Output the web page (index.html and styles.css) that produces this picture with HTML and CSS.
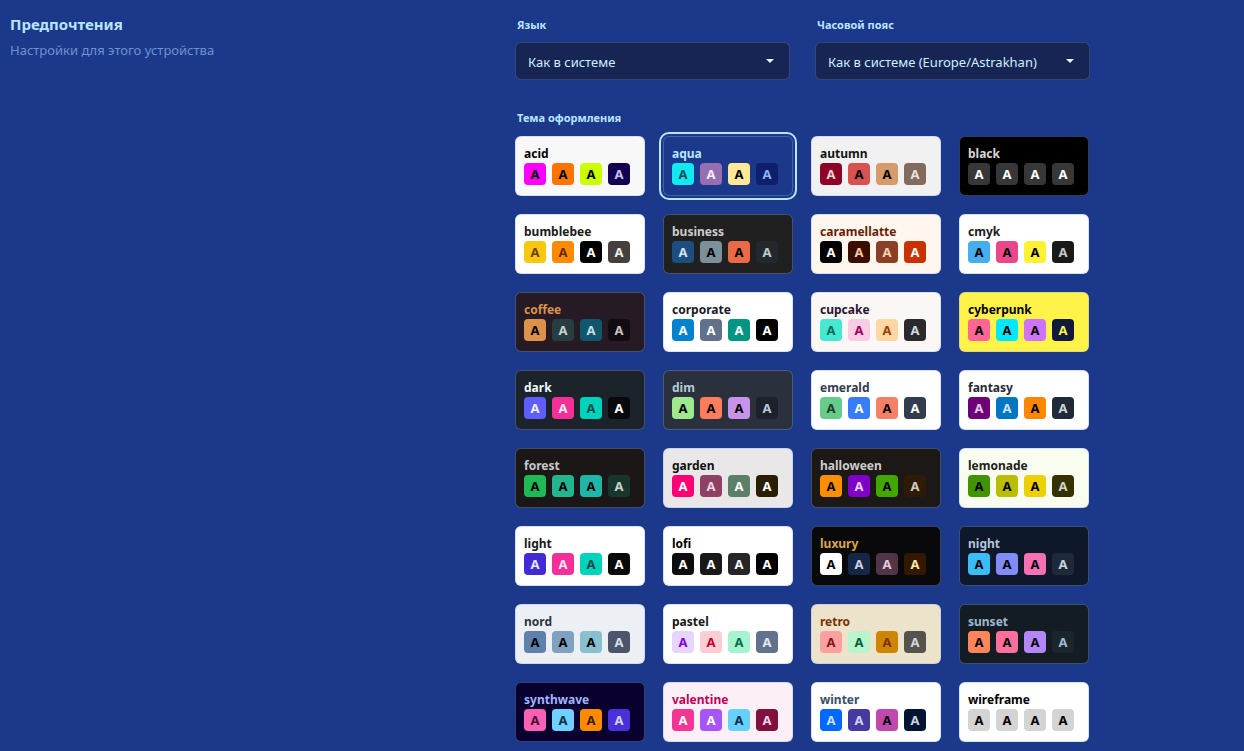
FILE: index.html
```html
<!DOCTYPE html>
<html lang="ru">
<head>
<meta charset="UTF-8">
<meta name="viewport" content="width=device-width, initial-scale=1.0">
<title>Предпочтения</title>
<link rel="stylesheet" href="styles.css">
</head>
<body>
  <div class="page">
    <div class="intro">
      <h2 class="intro-title">Предпочтения</h2>
      <p class="intro-sub">Настройки для этого устройства</p>
    </div>

    <div class="settings">
      <div class="selects">
        <label class="field">
          <span class="field-label">Язык</span>
          <span class="select">Как в системе<i class="caret"></i></span>
        </label>
        <label class="field">
          <span class="field-label">Часовой пояс</span>
          <span class="select">Как в системе (Europe/Astrakhan)<i class="caret"></i></span>
        </label>
      </div>

      <div class="field-label theme-label">Тема оформления</div>
      <div class="themes">
        <div class="theme t-acid"><div class="name">acid</div><div class="sw"><span class="p">A</span><span class="s">A</span><span class="a">A</span><span class="n">A</span></div></div>
        <div class="theme t-aqua selected"><div class="name">aqua</div><div class="sw"><span class="p">A</span><span class="s">A</span><span class="a">A</span><span class="n">A</span></div></div>
        <div class="theme t-autumn"><div class="name">autumn</div><div class="sw"><span class="p">A</span><span class="s">A</span><span class="a">A</span><span class="n">A</span></div></div>
        <div class="theme t-black"><div class="name">black</div><div class="sw"><span class="p">A</span><span class="s">A</span><span class="a">A</span><span class="n">A</span></div></div>

        <div class="theme t-bumblebee"><div class="name">bumblebee</div><div class="sw"><span class="p">A</span><span class="s">A</span><span class="a">A</span><span class="n">A</span></div></div>
        <div class="theme t-business"><div class="name">business</div><div class="sw"><span class="p">A</span><span class="s">A</span><span class="a">A</span><span class="n">A</span></div></div>
        <div class="theme t-caramellatte"><div class="name">caramellatte</div><div class="sw"><span class="p">A</span><span class="s">A</span><span class="a">A</span><span class="n">A</span></div></div>
        <div class="theme t-cmyk"><div class="name">cmyk</div><div class="sw"><span class="p">A</span><span class="s">A</span><span class="a">A</span><span class="n">A</span></div></div>

        <div class="theme t-coffee"><div class="name">coffee</div><div class="sw"><span class="p">A</span><span class="s">A</span><span class="a">A</span><span class="n">A</span></div></div>
        <div class="theme t-corporate"><div class="name">corporate</div><div class="sw"><span class="p">A</span><span class="s">A</span><span class="a">A</span><span class="n">A</span></div></div>
        <div class="theme t-cupcake"><div class="name">cupcake</div><div class="sw"><span class="p">A</span><span class="s">A</span><span class="a">A</span><span class="n">A</span></div></div>
        <div class="theme t-cyberpunk"><div class="name">cyberpunk</div><div class="sw"><span class="p">A</span><span class="s">A</span><span class="a">A</span><span class="n">A</span></div></div>

        <div class="theme t-dark"><div class="name">dark</div><div class="sw"><span class="p">A</span><span class="s">A</span><span class="a">A</span><span class="n">A</span></div></div>
        <div class="theme t-dim"><div class="name">dim</div><div class="sw"><span class="p">A</span><span class="s">A</span><span class="a">A</span><span class="n">A</span></div></div>
        <div class="theme t-emerald"><div class="name">emerald</div><div class="sw"><span class="p">A</span><span class="s">A</span><span class="a">A</span><span class="n">A</span></div></div>
        <div class="theme t-fantasy"><div class="name">fantasy</div><div class="sw"><span class="p">A</span><span class="s">A</span><span class="a">A</span><span class="n">A</span></div></div>

        <div class="theme t-forest"><div class="name">forest</div><div class="sw"><span class="p">A</span><span class="s">A</span><span class="a">A</span><span class="n">A</span></div></div>
        <div class="theme t-garden"><div class="name">garden</div><div class="sw"><span class="p">A</span><span class="s">A</span><span class="a">A</span><span class="n">A</span></div></div>
        <div class="theme t-halloween"><div class="name">halloween</div><div class="sw"><span class="p">A</span><span class="s">A</span><span class="a">A</span><span class="n">A</span></div></div>
        <div class="theme t-lemonade"><div class="name">lemonade</div><div class="sw"><span class="p">A</span><span class="s">A</span><span class="a">A</span><span class="n">A</span></div></div>

        <div class="theme t-light"><div class="name">light</div><div class="sw"><span class="p">A</span><span class="s">A</span><span class="a">A</span><span class="n">A</span></div></div>
        <div class="theme t-lofi"><div class="name">lofi</div><div class="sw"><span class="p">A</span><span class="s">A</span><span class="a">A</span><span class="n">A</span></div></div>
        <div class="theme t-luxury"><div class="name">luxury</div><div class="sw"><span class="p">A</span><span class="s">A</span><span class="a">A</span><span class="n">A</span></div></div>
        <div class="theme t-night"><div class="name">night</div><div class="sw"><span class="p">A</span><span class="s">A</span><span class="a">A</span><span class="n">A</span></div></div>

        <div class="theme t-nord"><div class="name">nord</div><div class="sw"><span class="p">A</span><span class="s">A</span><span class="a">A</span><span class="n">A</span></div></div>
        <div class="theme t-pastel"><div class="name">pastel</div><div class="sw"><span class="p">A</span><span class="s">A</span><span class="a">A</span><span class="n">A</span></div></div>
        <div class="theme t-retro"><div class="name">retro</div><div class="sw"><span class="p">A</span><span class="s">A</span><span class="a">A</span><span class="n">A</span></div></div>
        <div class="theme t-sunset"><div class="name">sunset</div><div class="sw"><span class="p">A</span><span class="s">A</span><span class="a">A</span><span class="n">A</span></div></div>

        <div class="theme t-synthwave"><div class="name">synthwave</div><div class="sw"><span class="p">A</span><span class="s">A</span><span class="a">A</span><span class="n">A</span></div></div>
        <div class="theme t-valentine"><div class="name">valentine</div><div class="sw"><span class="p">A</span><span class="s">A</span><span class="a">A</span><span class="n">A</span></div></div>
        <div class="theme t-winter"><div class="name">winter</div><div class="sw"><span class="p">A</span><span class="s">A</span><span class="a">A</span><span class="n">A</span></div></div>
        <div class="theme t-wireframe"><div class="name">wireframe</div><div class="sw"><span class="p">A</span><span class="s">A</span><span class="a">A</span><span class="n">A</span></div></div>
      </div>
    </div>
  </div>
</body>
</html>
```

FILE: styles.css
```css
body {
  margin: 0;
  background-color: #1c388b;
  color: #b8e6fe;
  font-family: "Noto Sans", "Open Sans", sans-serif;
}
.page {
  display: flex;
  padding: 0 10px;
}
.intro {
  width: 505px;
  padding-top: 14px;
}
.intro-title {
  margin: 0;
  font-size: 15px;
  line-height: 20px;
  font-weight: 700;
  color: #b8e6fe;
}
.intro-sub {
  margin: 7px 0 0;
  font-size: 13px;
  line-height: 18px;
  color: #6d93cf;
}
.settings {
  padding-top: 17px;
}
.selects {
  display: flex;
  gap: 25px;
}
.field {
  display: flex;
  flex-direction: column;
  gap: 9px;
}
.field-label {
  padding-left: 2px;
  font-size: 11px;
  line-height: 16px;
  font-weight: 700;
  color: #b8e6fe;
}
.select {
  display: flex;
  align-items: center;
  justify-content: space-between;
  width: 275px;
  height: 38px;
  box-sizing: border-box;
  padding: 2px 15px 0 12px;
  background-color: #172554;
  border: 1px solid rgba(184, 230, 254, 0.18);
  border-radius: 6px;
  font-size: 13px;
  color: #cdeffe;
}
.caret {
  width: 0;
  height: 0;
  margin-top: -2px;
  border-left: 4px solid transparent;
  border-right: 4px solid transparent;
  border-top: 4px solid #e6f6ff;
}
.theme-label {
  margin-top: 30px;
}
.themes {
  display: grid;
  grid-template-columns: repeat(4, 130px);
  gap: 18px;
  margin-top: 10px;
}
.theme {
  box-sizing: border-box;
  height: 60px;
  padding: 9px 8px 9px;
  border: 1px solid rgba(140, 175, 240, 0.35);
  border-radius: 6px;
  background-color: var(--b);
  color: var(--bc);
}
.theme.selected {
  outline: 2px solid #b8e6fe;
  outline-offset: 2px;
}
.name {
  font-size: 12px;
  line-height: 16px;
  font-weight: 700;
  margin-bottom: 1px;
}
.sw {
  display: flex;
  gap: 6px;
}
.sw span {
  width: 22px;
  height: 22px;
  border-radius: 4px;
  display: flex;
  align-items: center;
  justify-content: center;
  font-size: 13px;
  font-weight: 700;
}
.sw .p { background-color: var(--p); color: var(--pc); }
.sw .s { background-color: var(--s); color: var(--sc); }
.sw .a { background-color: var(--a); color: var(--ac); }
.sw .n { background-color: var(--n); color: var(--nc); }

.t-acid { --b: #f8f8f8; --bc: #000; --p: #ff00ff; --pc: #000; --s: #ff7400; --sc: #000; --a: #cbfd03; --ac: #000; --n: #140151; --nc: #c9c2ee; }
.t-aqua { --b: #1c388b; --bc: #b8e6fe; --p: #13e8f0; --pc: #005355; --s: #966fb3; --sc: #f4ecfa; --a: #ffe999; --ac: #000; --n: #0f1f6b; --nc: #8ab4f8; }
.t-autumn { --b: #f1f1f1; --bc: #141414; --p: #8c0327; --pc: #f0d2da; --s: #d85251; --sc: #000; --a: #d59b6a; --ac: #000; --n: #826a5c; --nc: #e8e0dc; }
.t-black { --b: #000; --bc: #d6d6d6; --p: #373737; --pc: #fff; --s: #373737; --sc: #fff; --a: #373737; --ac: #fff; --n: #373737; --nc: #fff; }
.t-bumblebee { --b: #fff; --bc: #1a1a1a; --p: #f9c80e; --pc: #6b4200; --s: #ff8a00; --sc: #6b2a00; --a: #000; --ac: #fff; --n: #45403c; --nc: #f0ece8; }
.t-business { --b: #202020; --bc: #cdcdcd; --p: #1c4e80; --pc: #d4e0f0; --s: #7c909a; --sc: #000; --a: #ea6947; --ac: #000; --n: #23282e; --nc: #c4c8cc; }
.t-caramellatte { --b: #fff7ed; --bc: #6b1d07; --p: #000; --pc: #fff; --s: #3a0d00; --sc: #f8c8a0; --a: #8a3f26; --ac: #f8d2b4; --n: #c83200; --nc: #fff; }
.t-cmyk { --b: #fff; --bc: #1a1a1a; --p: #45aeee; --pc: #000; --s: #e8488a; --sc: #000; --a: #fff232; --ac: #000; --n: #1a1a1a; --nc: #c8c8c8; }
.t-coffee { --b: #261b25; --bc: #db924b; --p: #db924b; --pc: #000; --s: #263e3f; --sc: #c8d2d2; --a: #10576d; --ac: #cadbe2; --n: #120c12; --nc: #c8c2c2; }
.t-corporate { --b: #fff; --bc: #181a2a; --p: #0082ce; --pc: #fff; --s: #61708b; --sc: #fff; --a: #009485; --ac: #fff; --n: #000; --nc: #fff; }
.t-cupcake { --b: #faf7f5; --bc: #291334; --p: #46e8d2; --pc: #006a5a; --s: #f9cbe5; --sc: #a0005a; --a: #fed7a4; --ac: #a04000; --n: #2a2a2e; --nc: #d0d8e4; }
.t-cyberpunk { --b: #fff248; --bc: #000; --p: #ff6596; --pc: #000; --s: #00e8ff; --sc: #000; --a: #ce74fc; --ac: #000; --n: #111a3b; --nc: #fff248; }
.t-dark { --b: #1d232a; --bc: #ecf9ff; --p: #605dff; --pc: #eeeeff; --s: #f43098; --sc: #fde8f3; --a: #00d3bb; --ac: #084d49; --n: #09090b; --nc: #fff; }
.t-dim { --b: #2a303c; --bc: #b2ccd6; --p: #9fe88d; --pc: #000; --s: #ff7d5c; --sc: #000; --a: #c792e9; --ac: #000; --n: #1c212b; --nc: #b2ccd6; }
.t-emerald { --b: #fff; --bc: #333c4d; --p: #66cc8a; --pc: #223d30; --s: #377cfb; --sc: #fff; --a: #f68067; --ac: #000; --n: #333c4d; --nc: #fff; }
.t-fantasy { --b: #fff; --bc: #1f2937; --p: #6d0076; --pc: #e2c8ea; --s: #0075c2; --sc: #d0e2f2; --a: #ff8600; --ac: #000; --n: #1f2937; --nc: #d0d4d8; }
.t-forest { --b: #1b1717; --bc: #cac9c9; --p: #1eb854; --pc: #000; --s: #22b58e; --sc: #000; --a: #1fb5a8; --ac: #000; --n: #19362d; --nc: #cad2ce; }
.t-garden { --b: #e9e7e7; --bc: #100f0f; --p: #fe0075; --pc: #fff; --s: #8e4162; --sc: #f2d2de; --a: #5c7f67; --ac: #fff; --n: #291e00; --nc: #fff; }
.t-halloween { --b: #1b1816; --bc: #cdcdcd; --p: #ff8f00; --pc: #000; --s: #7f00c8; --sc: #ead2f8; --a: #42a800; --ac: #000; --n: #2f1b05; --nc: #d2cac2; }
.t-lemonade { --b: #f8fdef; --bc: #1e2118; --p: #419400; --pc: #000; --s: #bbbd00; --sc: #000; --a: #edd000; --ac: #000; --n: #343300; --nc: #d2d2ca; }
.t-light { --b: #fff; --bc: #18181b; --p: #422ad5; --pc: #e0e6ff; --s: #f43098; --sc: #fbe0f0; --a: #00d3bb; --ac: #084d49; --n: #0b0809; --nc: #fff; }
.t-lofi { --b: #fff; --bc: #000; --p: #0d0d0d; --pc: #fff; --s: #1a1919; --sc: #fff; --a: #262626; --ac: #fff; --n: #000; --nc: #fff; }
.t-luxury { --b: #09090b; --bc: #dca54c; --p: #fff; --pc: #000; --s: #152747; --sc: #cad2e2; --a: #513448; --ac: #e2cada; --n: #331800; --nc: #ffe7a3; }
.t-night { --b: #0f172a; --bc: #b3c5dc; --p: #38bdf8; --pc: #000; --s: #818cf8; --sc: #000; --a: #f471b5; --ac: #000; --n: #1e293b; --nc: #cad2de; }
.t-nord { --b: #eceff4; --bc: #2e3440; --p: #5e81ac; --pc: #000; --s: #81a1c1; --sc: #000; --a: #88c0d0; --ac: #000; --n: #4c566a; --nc: #d8dee9; }
.t-pastel { --b: #fff; --bc: #161616; --p: #e8d4fe; --pc: #8000e0; --s: #fecdd3; --sc: #c00030; --a: #a7f3d0; --ac: #007050; --n: #62728c; --nc: #e2e8f0; }
.t-retro { --b: #ece3ca; --bc: #793205; --p: #ff9fa0; --pc: #801818; --s: #b7f6cd; --sc: #00603c; --a: #ce8601; --ac: #793205; --n: #56524c; --nc: #d6d5d5; }
.t-sunset { --b: #121c22; --bc: #9fb9d0; --p: #ff865b; --pc: #000; --s: #fd6f9c; --sc: #000; --a: #b387fa; --ac: #000; --n: #1b262c; --nc: #9fb9d0; }
.t-synthwave { --b: #09002f; --bc: #a0b4ff; --p: #f861b4; --pc: #4a1030; --s: #71d1fe; --sc: #0a3050; --a: #ff8a00; --ac: #402000; --n: #4a30d8; --nc: #d2d2ff; }
.t-valentine { --b: #fcf0f6; --bc: #c0005a; --p: #f53594; --pc: #fff; --s: #a855f7; --sc: #fff; --a: #66d1ff; --ac: #003050; --n: #80103e; --nc: #f8d2e2; }
.t-winter { --b: #fff; --bc: #394e6a; --p: #0069ff; --pc: #cadeff; --s: #463aa2; --sc: #d2d2f2; --a: #c148ac; --ac: #000; --n: #021431; --nc: #cad2de; }
.t-wireframe { --b: #fff; --bc: #000; --p: #d4d4d4; --pc: #000; --s: #d4d4d4; --sc: #000; --a: #d4d4d4; --ac: #000; --n: #d4d4d4; --nc: #000; }
```
